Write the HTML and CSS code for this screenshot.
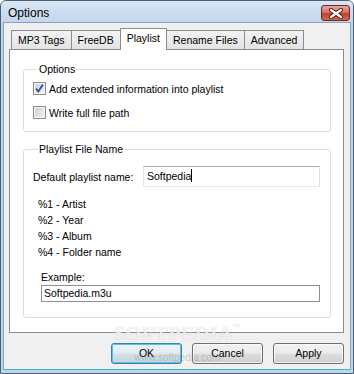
FILE: index.html
```html
<!DOCTYPE html>
<html lang="en">
<head>
  <meta charset="UTF-8">
  <title>Options</title>
  <link rel="stylesheet" href="styles.css">
</head>
<body>
<div class="window">
    <div class="titlebar">
        <span class="title">Options</span>
        <div class="close">
            <svg width="16" height="11" viewBox="0 0 16 11">
                <path d="M3 2 L13 9 M13 2 L3 9" stroke="#4a1a14" stroke-width="4" stroke-linecap="round"/>
                <path d="M3 2 L13 9 M13 2 L3 9" stroke="#fff" stroke-width="2.2" stroke-linecap="round"/>
            </svg>
        </div>
    </div>

    <div class="client">
        <div class="tabs">
            <div class="tab">MP3 Tags</div>
            <div class="tab">FreeDB</div>
            <div class="tab active">Playlist</div>
            <div class="tab">Rename Files</div>
            <div class="tab">Advanced</div>
        </div>

        <div class="panel">
            <fieldset class="group group-options">
                <legend>Options</legend>
                <label class="check">
                    <span class="box">
                        <svg width="11" height="11" viewBox="0 0 11 11">
                            <path d="M2 5.5 L4.3 8.5 L9 1.5" fill="none" stroke="#2a4fa8" stroke-width="1.8"/>
                        </svg>
                    </span>
                    Add extended information into playlist
                </label>
                <label class="check">
                    <span class="box"></span>
                    Write full file path
                </label>
            </fieldset>

            <fieldset class="group group-name">
                <legend>Playlist File Name</legend>
                <div class="name-row">
                    <span class="name-label">Default playlist name:</span>
                    <div class="field">Softpedia<span class="caret"></span></div>
                </div>
                <ul class="vars">
                    <li>%1 - Artist</li>
                    <li>%2 - Year</li>
                    <li>%3 - Album</li>
                    <li>%4 - Folder name</li>
                </ul>
                <div class="example-label">Example:</div>
                <div class="field field-example">Softpedia.m3u</div>
            </fieldset>
        </div>

        <div class="buttons">
            <div class="btn btn-default">OK</div>
            <div class="btn">Cancel</div>
            <div class="btn">Apply</div>
        </div>
    </div>

    <div class="watermark">SOFTPEDIA<sup>™</sup></div>
    <div class="watermark-url">www.softpedia.com</div>
</div>
</body>
</html>
```

FILE: styles.css
```css
body {
    margin: 0;
    padding: 0;
    font-family: 'Liberation Sans', Arial, sans-serif;
    font-size: 10.5px;
    color: #000;
}

.window {
    position: relative;
    width: 354px;
    height: 374px;
    box-sizing: border-box;
    border: 1px solid #4d6072;
    border-radius: 6px 6px 0 0;
    background: #c1d5ec;
    display: flex;
    flex-direction: column;
    overflow: hidden;
}

.titlebar {
    height: 21px;
    display: flex;
    align-items: center;
    justify-content: space-between;
    padding: 0 3px 0 7px;
    background: linear-gradient(#d8e5f4, #c3d6ec);
}
.title {
    font-size: 12px;
    margin-top: 2px;
}
.close {
    width: 27px;
    height: 14px;
    margin-top: 3px;
    border: 1px solid #6e2a22;
    border-radius: 3px;
    background: linear-gradient(#e3a79c 0%, #d57566 45%, #c2402f 55%, #cc6a4f 100%);
    display: flex;
    align-items: center;
    justify-content: center;
}

.client {
    flex: 1;
    margin: 0 2px 3px;
    border: 1px solid #8ba2bd;
    border-bottom-color: #3fb5d6;
    background: #f0f0f0;
    padding: 6px 6px 0 5px;
}

.tabs {
    display: flex;
    align-items: flex-end;
    height: 20px;
    padding-left: 2px;
}
.tab {
    height: 18px;
    line-height: 18px;
    padding: 0 6px;
    border: 1px solid #898c95;
    border-bottom: none;
    border-right: none;
    background: linear-gradient(#f3f3f3, #e3e3e3);
}
.tab:nth-child(4) {
    border-left: none;
}
.tab:last-child {
    border-right: 1px solid #898c95;
}
.tab.active {
    position: relative;
    z-index: 1;
    height: 21px;
    line-height: 19px;
    margin-bottom: -1px;
    padding: 0 6px;
    border-right: 1px solid #898c95;
    background: #fff;
}

.panel {
    box-sizing: border-box;
    height: 284px;
    border: 1px solid #898c95;
    background: #fff;
    padding: 13px 12px 0 13px;
}

.group {
    margin: 0;
    border: 1px solid #d5dfe5;
    border-radius: 3px;
    min-width: 0;
}
.group legend {
    padding: 0 1px;
    margin-left: 5px;
    line-height: 13px;
}
.group-options {
    padding: 4px 0 10px 9px;
    display: flex;
    flex-direction: column;
    gap: 7px;
}
.group-name {
    margin-top: 11px;
    padding: 10px 10px 15px 9px;
}

.check {
    display: flex;
    align-items: center;
    height: 17px;
}
.box {
    width: 11px;
    height: 11px;
    margin-right: 3px;
    border: 1px solid #8e8f8f;
    background: linear-gradient(135deg, #cbcfd5, #f4f4f4);
    box-shadow: inset 0 0 0 1px #f4f4f4;
    display: flex;
    align-items: center;
    justify-content: center;
}

.name-row {
    display: flex;
    align-items: center;
}
.name-label {
    width: 110px;
    flex: none;
}
.field {
    flex: 1;
    height: 19px;
    line-height: 19px;
    padding-left: 3px;
    border: 1px solid;
    border-color: #abadb3 #dbdfe6 #e3e9ef #e2e3ea;
    background: #fff;
}
.caret {
    display: inline-block;
    width: 1px;
    height: 13px;
    background: #000;
    vertical-align: -2px;
}

.vars {
    list-style: none;
    margin: 9px 0 0;
    padding-left: 5px;
}
.vars li {
    line-height: 16px;
}

.example-label {
    margin-top: 9px;
    padding-left: 8px;
    line-height: 16px;
}
.field-example {
    margin-left: 8px;
    height: 15px;
    line-height: 15px;
    padding-left: 2px;
    border-color: #8e8f8f;
}

.buttons {
    display: flex;
    justify-content: flex-end;
    gap: 10px;
    margin-top: 10px;
}
.btn {
    width: 69px;
    height: 19px;
    line-height: 19px;
    text-align: center;
    border: 1px solid #707070;
    border-radius: 3px;
    background: linear-gradient(#f2f2f2 0%, #ebebeb 48%, #dddddd 52%, #cfcfcf 100%);
    box-shadow: inset 0 0 0 1px rgba(255, 255, 255, 0.7);
}
.btn-default {
    border-color: #3c7fb1;
    box-shadow: inset 0 0 0 1px #4fc6f0;
    background: linear-gradient(#eef3f6 0%, #e4ecf1 48%, #d5dfe6 52%, #c8d4dc 100%);
}

.watermark {
    position: absolute;
    left: 113px;
    top: 322px;
    font-family: 'Liberation Serif', serif;
    font-size: 20px;
    font-weight: 700;
    letter-spacing: 0.5px;
    color: rgba(255, 255, 255, 0.75);
    text-shadow: 0 0 1px rgba(0, 0, 0, 0.2);
    pointer-events: none;
}
.watermark sup {
    font-size: 7px;
    vertical-align: 12px;
}
.watermark-url {
    position: absolute;
    left: 133px;
    top: 351px;
    font-size: 10px;
    color: rgba(110, 110, 110, 0.3);
    pointer-events: none;
}
```
